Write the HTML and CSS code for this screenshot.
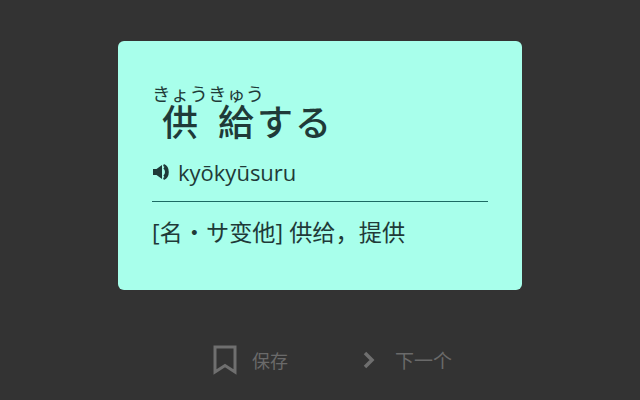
FILE: index.html
```html
<!DOCTYPE html>
<html lang="zh-CN">
<head>
    <meta charset="UTF-8">
    <title>Word Card</title>
    <link rel="stylesheet" href="styles.css">
</head>
<body>
    <div class="container">
        <!-- Word Card -->
        <div class="card">
            <div class="word"><ruby>供給<rt>きょうきゅう</rt></ruby><span class="kana">する</span></div>
            <div class="reading">
                <svg class="sound-icon" viewBox="0 0 18 16" width="18" height="16">
                    <path d="M0 5h3.500L9 1v14l-5.500-4H0z" fill="#1f3a38"/>
                    <path d="M11 3.500c2.800 1.800 2.800 7.200 0 9M10.500 1c5.600 2.400 5.600 11.600 0 14" fill="none" stroke="#1f3a38" stroke-width="2.200"/>
                </svg>
                <span>kyōkyūsuru</span>
            </div>
            <div class="meaning">[名・サ变他] 供给，提供</div>
        </div>

        <!-- Actions -->
        <div class="actions">
            <div class="action action-save">
                <svg viewBox="0 0 24 30" width="24" height="30">
                    <path d="M2 2h20v25l-10-6.500L2 27z" fill="none" stroke="#6f6f6f" stroke-width="3"/>
                </svg>
                <span>保存</span>
            </div>
            <div class="action action-next">
                <svg viewBox="0 0 12 18" width="12" height="18">
                    <path d="M2 2l7 7-7 7" fill="none" stroke="#6f6f6f" stroke-width="3.500"/>
                </svg>
                <span class="next-label">下一个</span>
            </div>
        </div>
    </div>
</body>
</html>
```

FILE: styles.css
```css
html, body {
    height: 100%;
}
body {
    margin: 0;
    background-color: #333333;
    font-family: "Open Sans", "Noto Sans CJK SC", sans-serif;
    overflow: hidden;
}
.container {
    width: 404px;
    margin: 0 auto;
    padding-top: 41px;
}

/* Card */
.card {
    box-sizing: border-box;
    height: 249px;
    padding: 43px 34px 0;
    background-color: #a8ffeb;
    border-radius: 6px;
    color: #1f3a38;
}
.word {
    font-family: "Noto Sans CJK JP", sans-serif;
    font-size: 36px;
    line-height: 54px;
    height: 65px;
    font-weight: 500;
}
.kana {
    margin-left: 2px;
    letter-spacing: 2px;
}
ruby {
    ruby-align: space-around;
}
rt {
    font-size: 18.700px;
    line-height: 20px;
    font-weight: 400;
}
.reading {
    display: flex;
    align-items: center;
    gap: 7px;
    height: 46px;
    font-size: 22px;
    padding-left: 1px;
    border-bottom: 1px solid #1c6a63;
    padding-bottom: 6px;
}
.sound-icon {
    flex: none;
}
.meaning {
    margin-top: 14px;
    font-size: 23.200px;
    line-height: 32px;
}

/* Actions */
.actions {
    display: flex;
    margin-top: 55px;
    padding-left: 95px;
}
.action {
    display: flex;
    align-items: center;
    color: #6a6a6a;
    font-size: 18px;
    height: 30px;
}
.action-save {
    gap: 15px;
    width: 150px;
}
.action-next {
    gap: 20px;
}
.next-label {
    font-size: 19px;
}
```
